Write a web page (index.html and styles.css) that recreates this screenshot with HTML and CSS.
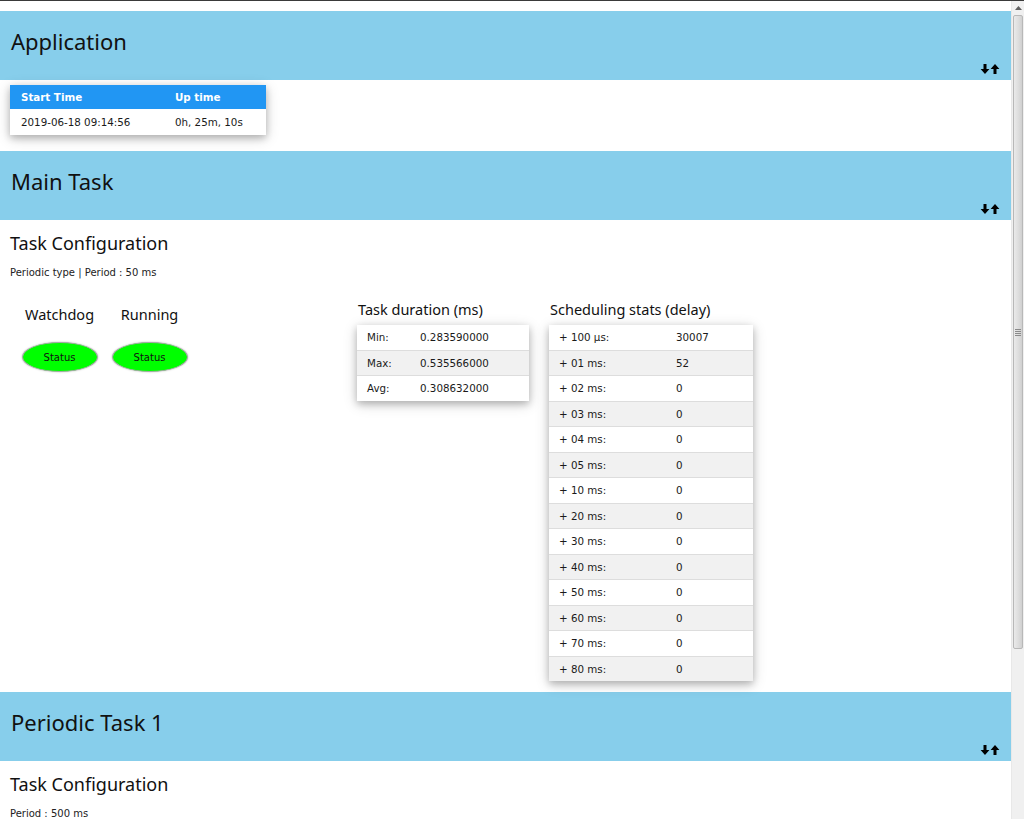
FILE: index.html
```html
<!DOCTYPE html>
<html>
<head>
<meta charset="utf-8">
<title>Tasks</title>
<link rel="stylesheet" href="styles.css">
</head>
<body>
<div class="topline"></div>
<div class="window">
  <main class="page">
    <section class="panel">
      <header class="band">
        <h1>Application</h1>
        <div class="toggles">
          <svg viewBox="0 0 10 10" width="10" height="10"><path d="M3.5 0h3v5h2.9L5 10 0.6 5h2.9z"/></svg>
          <svg viewBox="0 0 10 10" width="10" height="10"><path d="M3.5 10h3V5h2.9L5 0 0.6 5h2.9z"/></svg>
        </div>
      </header>
      <div class="content app-content">
        <table class="card tbl app-table">
          <colgroup><col class="k"><col></colgroup>
          <thead><tr><th>Start Time</th><th>Up time</th></tr></thead>
          <tbody><tr><td>2019-06-18 09:14:56</td><td>0h, 25m, 10s</td></tr></tbody>
        </table>
      </div>
    </section>

    <section class="panel">
      <header class="band">
        <h1>Main Task</h1>
        <div class="toggles">
          <svg viewBox="0 0 10 10" width="10" height="10"><path d="M3.5 0h3v5h2.9L5 10 0.6 5h2.9z"/></svg>
          <svg viewBox="0 0 10 10" width="10" height="10"><path d="M3.5 10h3V5h2.9L5 0 0.6 5h2.9z"/></svg>
        </div>
      </header>
      <div class="content task-content">
        <h2>Task Configuration</h2>
        <p class="info">Periodic type | Period : 50 ms</p>
        <div class="stats-row">
          <div class="statuses">
            <div class="status"><div class="status-label">Watchdog</div><div class="pill">Status</div></div>
            <div class="status"><div class="status-label">Running</div><div class="pill">Status</div></div>
          </div>
          <div class="stat-block">
            <h3>Task duration (ms)</h3>
            <table class="card tbl striped dur-table">
              <colgroup><col class="k"><col></colgroup>
              <tr><td>Min:</td><td>0.283590000</td></tr>
              <tr><td>Max:</td><td>0.535566000</td></tr>
              <tr><td>Avg:</td><td>0.308632000</td></tr>
            </table>
          </div>
          <div class="stat-block">
            <h3>Scheduling stats (delay)</h3>
            <table class="card tbl striped sched-table">
              <colgroup><col class="k"><col></colgroup>
              <tr><td>+ 100 µs:</td><td>30007</td></tr>
              <tr><td>+ 01 ms:</td><td>52</td></tr>
              <tr><td>+ 02 ms:</td><td>0</td></tr>
              <tr><td>+ 03 ms:</td><td>0</td></tr>
              <tr><td>+ 04 ms:</td><td>0</td></tr>
              <tr><td>+ 05 ms:</td><td>0</td></tr>
              <tr><td>+ 10 ms:</td><td>0</td></tr>
              <tr><td>+ 20 ms:</td><td>0</td></tr>
              <tr><td>+ 30 ms:</td><td>0</td></tr>
              <tr><td>+ 40 ms:</td><td>0</td></tr>
              <tr><td>+ 50 ms:</td><td>0</td></tr>
              <tr><td>+ 60 ms:</td><td>0</td></tr>
              <tr><td>+ 70 ms:</td><td>0</td></tr>
              <tr><td>+ 80 ms:</td><td>0</td></tr>
            </table>
          </div>
        </div>
      </div>
    </section>

    <section class="panel">
      <header class="band">
        <h1>Periodic Task 1</h1>
        <div class="toggles">
          <svg viewBox="0 0 10 10" width="10" height="10"><path d="M3.5 0h3v5h2.9L5 10 0.6 5h2.9z"/></svg>
          <svg viewBox="0 0 10 10" width="10" height="10"><path d="M3.5 10h3V5h2.9L5 0 0.6 5h2.9z"/></svg>
        </div>
      </header>
      <div class="content task-content">
        <h2>Task Configuration</h2>
        <p class="info">Period : 500 ms</p>
      </div>
    </section>
  </main>
  <div class="scrollbar">
    <div class="sb-btn"><svg viewBox="0 0 7 4" width="7" height="4"><path d="M0 4L3.5 0 7 4z"/></svg></div>
    <div class="sb-thumb"><div class="grip"></div></div>
    <div class="sb-track"></div>
  </div>
</div>
</body>
</html>
```

FILE: styles.css
```css
html, body {
  margin: 0;
  padding: 0;
  height: 100%;
  overflow: hidden;
  background: #fff;
}
body {
  font-family: "DejaVu Sans", Verdana, sans-serif;
  font-size: 10px;
  color: #000;
}
.topline {
  height: 1px;
  background: #3a3a3a;
}
.window {
  display: flex;
  height: 818px;
}
.page {
  flex: 1;
  padding-top: 10px;
  overflow: hidden;
}
.band {
  background: #87ceeb;
  height: 69px;
  box-sizing: border-box;
  display: flex;
  justify-content: space-between;
  padding: 0 11px 6px 11px;
}
.band h1 {
  margin: 0;
  align-self: center;
  font-family: "Noto Sans", "Open Sans", sans-serif;
  font-weight: 400;
  font-size: 22px;
  line-height: 30px;
  padding-bottom: 3px;
  color: #111;
}
.toggles {
  align-self: flex-end;
  display: flex;
}
.toggles svg {
  display: block;
  fill: #000;
}
.content {
  padding: 0 10px;
}
.app-content {
  padding-top: 5px;
  padding-bottom: 16px;
}
.task-content {
  padding-bottom: 11px;
}
.card {
  box-shadow: 0 3px 7px 0 rgba(0,0,0,0.2), 0 3px 13px 0 rgba(0,0,0,0.19);
}
.tbl {
  border-collapse: collapse;
  table-layout: fixed;
  background: #fff;
  color: #1a1a1a;
}
.tbl td, .tbl th {
  padding: 0 10px;
  text-align: left;
  font-size: 10.3px;
  line-height: 14px;
  white-space: nowrap;
}
.app-table {
  width: 256px;
}
.app-table .k {
  width: 154px;
}
.app-table th {
  background: #2196f3;
  color: #fff;
  font-weight: 700;
  height: 24px;
  padding-left: 11px;
}
.app-table td {
  height: 26px;
  padding-left: 11px;
}
.striped tr {
  border-bottom: 1px solid #ddd;
}
.striped tr:last-child {
  border-bottom: none;
}
.striped tr:nth-child(even) {
  background: #f1f1f1;
}
.striped td {
  height: 24.5px;
}
.dur-table {
  width: 172px;
}
.dur-table .k {
  width: 53px;
}
.sched-table {
  width: 204px;
}
.sched-table .k {
  width: 117px;
}
h2 {
  margin: 11px 0 0;
  font-family: "Noto Sans", "Open Sans", sans-serif;
  font-weight: 400;
  font-size: 18px;
  line-height: 24px;
  color: #111;
}
.info {
  margin: 10px 0 0;
  font-size: 10px;
  line-height: 15px;
  color: #222;
}
.stats-row {
  display: flex;
  align-items: flex-start;
  margin-top: 19px;
}
.statuses {
  width: 347px;
  display: flex;
  gap: 13px;
  padding-top: 5px;
  padding-left: 11px;
  box-sizing: border-box;
}
.status {
  width: 77px;
  display: flex;
  flex-direction: column;
  align-items: center;
}
.status-label {
  font-family: "Noto Sans", "Open Sans", sans-serif;
  font-size: 14.5px;
  line-height: 20px;
  color: #111;
  margin-bottom: 18px;
}
.pill {
  width: 74px;
  height: 28px;
  border-radius: 50%;
  background: #00ff00;
  border: 1px solid #a8a8a8;
  box-shadow: 0 0 2px rgba(0,0,0,0.3);
  display: flex;
  align-items: center;
  justify-content: center;
  font-size: 10px;
  color: #111;
}
.stat-block {
  margin-right: 20px;
}
.stat-block h3 {
  margin: 0 0 6px;
  font-family: "Noto Sans", "Open Sans", sans-serif;
  font-weight: 400;
  font-size: 14.5px;
  line-height: 20px;
  color: #111;
  padding-left: 1px;
}
.scrollbar {
  width: 12px;
  background: #f0f0f0;
  border-left: 1px solid #e8e8e8;
  display: flex;
  flex-direction: column;
  padding-top: 1px;
}
.sb-btn {
  height: 12px;
  display: flex;
  align-items: center;
  justify-content: center;
}
.sb-btn svg {
  fill: #606060;
}
.sb-thumb {
  height: 632px;
  margin: 1px 1px 0 1px;
  border: 1px solid #b8b8b8;
  border-radius: 2px;
  background: linear-gradient(to right, #eaeaea, #dcdcdc 60%, #d0d0d0);
  display: flex;
  align-items: center;
  justify-content: center;
}
.grip {
  width: 6px;
  height: 7px;
  background: repeating-linear-gradient(to bottom, #8a8a8a 0 1px, transparent 1px 2px);
}
.sb-track {
  flex: 1;
}
```
